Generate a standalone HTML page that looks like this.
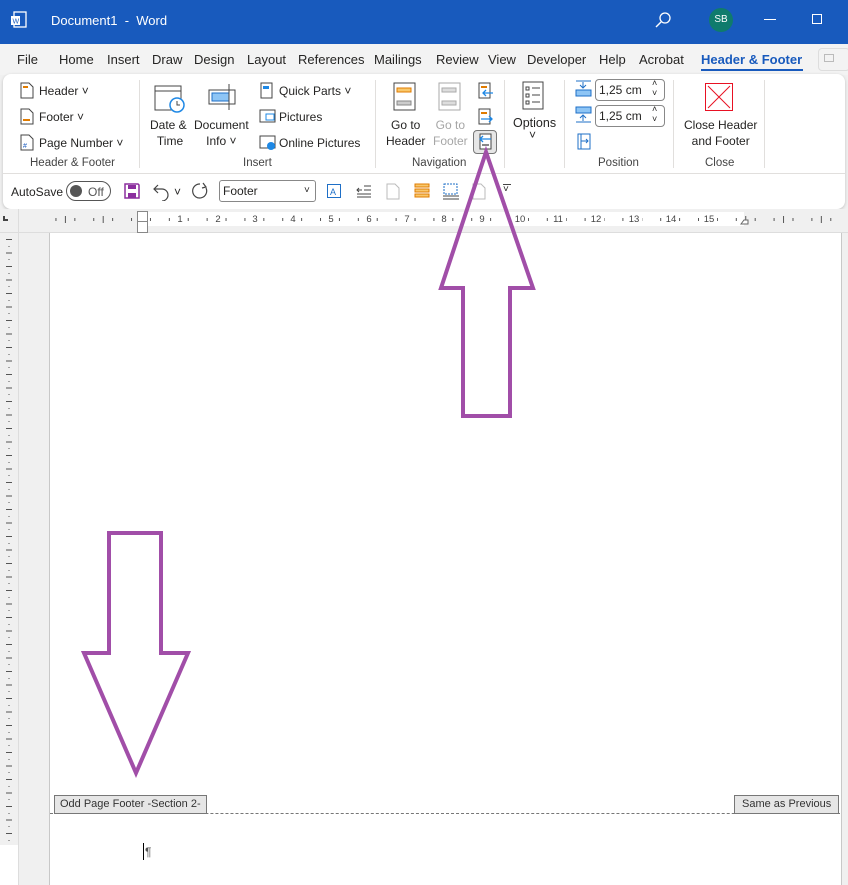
<!DOCTYPE html>
<html><head><meta charset="utf-8"><style>
*{margin:0;padding:0;box-sizing:border-box}
body{width:848px;height:885px;overflow:hidden;background:#f0f0f0;font-family:"Liberation Sans",sans-serif;font-size:12px;color:#252423;position:relative}
.a{position:absolute;white-space:nowrap}
.t{font-size:13px;top:52px}
.g{font-size:11.5px;color:#444;top:157px}
.sep{position:absolute;width:1px;background:#e1dfdd}
</style></head><body>
<!-- title bar -->
<div class="a" style="left:0;top:0;width:848px;height:44px;background:#185abd"></div>
<svg class="a" style="left:10px;top:11px" width="18" height="18"><rect x="4" y="1" width="12" height="15" fill="none" stroke="#fff" stroke-width="1.3"/><rect x="1" y="5" width="9" height="9" fill="#fff"/><text x="2.5" y="12.5" font-size="7" fill="#185abd" font-family="Liberation Sans">W</text></svg>
<div class="a" style="left:51px;top:13px;color:#fff;font-size:13px">Document1 &nbsp;- &nbsp;Word</div>
<svg class="a" style="left:654px;top:11px" width="18" height="18"><circle cx="11" cy="7" r="5" fill="none" stroke="#fff" stroke-width="1.3"/><line x1="7" y1="11" x2="2" y2="16" stroke="#fff" stroke-width="1.4"/></svg>
<div class="a" style="left:709px;top:8px;width:24px;height:24px;border-radius:12px;background:#0f7b6c;color:#fff;font-size:10px;text-align:center;line-height:24px">SB</div>
<div class="a" style="left:764px;top:19px;width:12px;height:1px;background:#fff"></div>
<div class="a" style="left:812px;top:14px;width:10px;height:10px;border:1.3px solid #fff"></div>
<!-- tabs -->
<div class="a" style="left:0;top:44px;width:848px;height:31px;background:#f3f3f3"></div>
<div class="a t" style="left:17px">File</div>
<div class="a t" style="left:59px">Home</div>
<div class="a t" style="left:107px">Insert</div>
<div class="a t" style="left:152px">Draw</div>
<div class="a t" style="left:194px">Design</div>
<div class="a t" style="left:247px">Layout</div>
<div class="a t" style="left:298px">References</div>
<div class="a t" style="left:374px">Mailings</div>
<div class="a t" style="left:436px">Review</div>
<div class="a t" style="left:488px">View</div>
<div class="a t" style="left:527px">Developer</div>
<div class="a t" style="left:599px">Help</div>
<div class="a t" style="left:639px">Acrobat</div>
<div class="a t" style="left:701px;color:#185abd;font-weight:bold;font-size:13px">Header &amp; Footer</div>
<div class="a" style="left:701px;top:69px;width:102px;height:2px;background:#185abd"></div>
<div class="a" style="left:818px;top:48px;width:32px;height:23px;border:1px solid #ddd;border-radius:4px"></div>
<div class="a" style="left:824px;top:54px;width:10px;height:8px;border:1px solid #bbb"></div>
<!-- ribbon -->
<div class="a" style="left:3px;top:74px;width:842px;height:135px;background:#fff;border-radius:8px;box-shadow:0 1px 3px rgba(0,0,0,.2)"></div>
<div class="a" style="left:3px;top:173px;width:842px;height:1px;background:#e1dfdd"></div>
<!-- H&F group -->
<svg class="a" style="left:20px;top:82px" width="14" height="17"><path d="M1 1h8l4 4v11H1z" fill="#fff" stroke="#444"/><rect x="3" y="4" width="5" height="2" fill="#e07b00"/></svg>
<div class="a" style="left:39px;top:84px">Header ˅</div>
<svg class="a" style="left:20px;top:108px" width="14" height="17"><path d="M1 1h8l4 4v11H1z" fill="#fff" stroke="#444"/><rect x="3" y="11" width="7" height="2" fill="#e07b00"/></svg>
<div class="a" style="left:39px;top:110px">Footer ˅</div>
<svg class="a" style="left:20px;top:134px" width="14" height="17"><path d="M1 1h8l4 4v11H1z" fill="#fff" stroke="#444"/><text x="3" y="14" font-size="7" fill="#185abd">#</text></svg>
<div class="a" style="left:39px;top:136px">Page Number ˅</div>
<div class="a g" style="left:30px">Header &amp; Footer</div>
<div class="sep" style="left:139px;top:80px;height:88px"></div>
<!-- Insert group -->
<svg class="a" style="left:154px;top:82px" width="32" height="32"><rect x="1" y="4" width="26" height="24" fill="#fff" stroke="#444"/><line x1="1" y1="9" x2="27" y2="9" stroke="#444"/><circle cx="23" cy="23" r="7" fill="#fff" stroke="#1e88e5" stroke-width="1.5"/><path d="M23 19v4h3" stroke="#444" fill="none"/></svg>
<div class="a" style="left:150px;top:117px;text-align:center;line-height:16px">Date &amp;<br>&nbsp;Time</div>
<svg class="a" style="left:207px;top:82px" width="32" height="30"><rect x="2" y="8" width="26" height="14" fill="#fff" stroke="#444"/><rect x="5" y="11" width="17" height="8" fill="#8ec5f5" stroke="#1e6fc7"/><line x1="22" y1="2" x2="22" y2="28" stroke="#444"/></svg>
<div class="a" style="left:194px;top:117px;text-align:center;line-height:16px">Document<br>Info ˅</div>
<svg class="a" style="left:260px;top:82px" width="14" height="17"><rect x="1" y="1" width="11" height="15" fill="#fff" stroke="#444"/><rect x="3" y="4" width="6" height="3" fill="#1e88e5"/></svg>
<div class="a" style="left:279px;top:84px">Quick Parts ˅</div>
<svg class="a" style="left:259px;top:109px" width="17" height="15"><rect x="1" y="1" width="15" height="12" fill="#fff" stroke="#444"/><rect x="7" y="5" width="8" height="6" fill="#fff" stroke="#1e88e5"/></svg>
<div class="a" style="left:279px;top:110px">Pictures</div>
<svg class="a" style="left:259px;top:135px" width="17" height="16"><rect x="1" y="1" width="15" height="12" fill="#fff" stroke="#444"/><circle cx="12" cy="11" r="4" fill="#1e88e5"/></svg>
<div class="a" style="left:279px;top:136px">Online Pictures</div>
<div class="a g" style="left:243px">Insert</div>
<div class="sep" style="left:375px;top:80px;height:88px"></div>
<!-- Navigation -->
<svg class="a" style="left:393px;top:82px" width="24" height="30"><rect x="1" y="1" width="21" height="27" fill="#fff" stroke="#444"/><rect x="4" y="6" width="14" height="4" fill="#f9c86b" stroke="#e07b00"/><rect x="4" y="19" width="14" height="4" fill="#ccc" stroke="#888"/></svg>
<div class="a" style="left:386px;top:117px;text-align:center;line-height:16px">Go to<br>Header</div>
<svg class="a" style="left:438px;top:82px" width="24" height="30"><rect x="1" y="1" width="21" height="27" fill="#fff" stroke="#aaa"/><rect x="4" y="6" width="14" height="4" fill="#ddd" stroke="#aaa"/><rect x="4" y="19" width="14" height="4" fill="#ddd" stroke="#aaa"/></svg>
<div class="a" style="left:433px;top:117px;text-align:center;line-height:16px;color:#a6a6a6">Go to<br>Footer</div>
<svg class="a" style="left:478px;top:82px" width="16" height="17"><rect x="1" y="1" width="11" height="15" fill="#fff" stroke="#444"/><rect x="3" y="4" width="6" height="2" fill="#e07b00"/><path d="M15 11H5M8 8l-3 3 3 3" stroke="#1e88e5" fill="none" stroke-width="1.3"/></svg>
<svg class="a" style="left:478px;top:108px" width="16" height="17"><rect x="1" y="1" width="11" height="15" fill="#fff" stroke="#444"/><rect x="3" y="4" width="6" height="2" fill="#e07b00"/><path d="M3 11h11M11 8l3 3-3 3" stroke="#1e88e5" fill="none" stroke-width="1.3"/></svg>
<div class="a" style="left:473px;top:130px;width:24px;height:24px;background:#e6e6e6;border:1px solid #777;border-radius:4px"></div>
<svg class="a" style="left:478px;top:133px" width="16" height="18"><rect x="2" y="1" width="11" height="15" fill="#fff" stroke="#444"/><rect x="4" y="11" width="7" height="2" fill="#888"/><path d="M13 6H2M5 3L2 6l3 3" stroke="#1e88e5" fill="none" stroke-width="1.3"/></svg>
<div class="a g" style="left:412px">Navigation</div>
<div class="sep" style="left:504px;top:80px;height:88px"></div>
<!-- Options -->
<svg class="a" style="left:522px;top:81px" width="22" height="29"><rect x="1" y="1" width="20" height="27" fill="#fff" stroke="#444"/><g stroke="#444" fill="none"><rect x="4" y="6" width="3" height="3"/><rect x="4" y="13" width="3" height="3"/><rect x="4" y="20" width="3" height="3"/><path d="M10 7h8M10 14h8M10 21h8"/></g></svg>
<div class="a" style="left:513px;top:116px;font-size:12.5px">Options</div>
<div class="a" style="left:529px;top:128px">˅</div>
<div class="sep" style="left:564px;top:80px;height:88px"></div>
<!-- Position -->
<svg class="a" style="left:575px;top:80px" width="18" height="18"><rect x="1" y="10" width="15" height="6" fill="#8ec5f5" stroke="#1e6fc7"/><path d="M1 1h15M8 2v6M5 5l3 3 3-3" stroke="#1e6fc7" fill="none"/></svg>
<div class="a" style="left:595px;top:79px;width:70px;height:22px;border:1px solid #888;border-radius:4px;padding:3px 0 0 3px">1,25 cm</div>
<div class="a" style="left:652px;top:78px;font-size:9px;line-height:10px">˄<br>˅</div>
<svg class="a" style="left:575px;top:106px" width="18" height="18"><rect x="1" y="1" width="15" height="6" fill="#8ec5f5" stroke="#1e6fc7"/><path d="M1 16h15M8 15v-6M5 12l3-3 3 3" stroke="#1e6fc7" fill="none"/></svg>
<div class="a" style="left:595px;top:105px;width:70px;height:22px;border:1px solid #888;border-radius:4px;padding:3px 0 0 3px">1,25 cm</div>
<div class="a" style="left:652px;top:104px;font-size:9px;line-height:10px">˄<br>˅</div>
<svg class="a" style="left:577px;top:133px" width="14" height="17"><rect x="1" y="1" width="12" height="15" fill="#fff" stroke="#1e6fc7"/><path d="M4 1v15M4 8h7M9 6l2 2-2 2" stroke="#1e6fc7" fill="none"/></svg>
<div class="a g" style="left:598px">Position</div>
<div class="sep" style="left:673px;top:80px;height:88px"></div>
<!-- Close -->
<svg class="a" style="left:705px;top:83px" width="29" height="29"><rect x="0.5" y="0.5" width="27" height="27" fill="#fff" stroke="#e81123"/><path d="M3 3l22 22M25 3L3 25" stroke="#e81123"/></svg>
<div class="a" style="left:684px;top:117px;text-align:center;line-height:16px">Close Header<br>and Footer</div>
<div class="a g" style="left:705px">Close</div>
<div class="sep" style="left:764px;top:80px;height:88px"></div>
<!-- QAT -->
<div class="a" style="left:11px;top:185px">AutoSave</div>
<div class="a" style="left:66px;top:181px;width:45px;height:20px;border:1px solid #555;border-radius:10px"></div>
<div class="a" style="left:70px;top:185px;width:12px;height:12px;border-radius:6px;background:#555"></div>
<div class="a" style="left:88px;top:185px;color:#555">Off</div>
<svg class="a" style="left:124px;top:183px" width="16" height="16"><path d="M1 1h13l1 1v13H1z" fill="#fff" stroke="#8b2e9e" stroke-width="1.5"/><rect x="4" y="2" width="8" height="4" fill="#8b2e9e"/><rect x="4" y="10" width="8" height="5" fill="#8b2e9e"/></svg>
<svg class="a" style="left:152px;top:181px" width="20" height="20"><path d="M6 4L2 8l4 4M2 8h8a6 6 0 0 1 0 12" stroke="#444" fill="none" stroke-width="1.2"/></svg>
<div class="a" style="left:174px;top:185px">˅</div>
<svg class="a" style="left:190px;top:181px" width="20" height="20"><path d="M10 3a7 7 0 1 0 6 4M13 2l3 4-4 1" stroke="#444" fill="none" stroke-width="1.2"/></svg>
<div class="a" style="left:219px;top:180px;width:97px;height:22px;border:1px solid #888;border-radius:3px;padding:3px 0 0 3px">Footer</div>
<div class="a" style="left:304px;top:185px;font-size:10px">˅</div>
<svg class="a" style="left:326px;top:183px" width="16" height="16"><rect x="1.5" y="1.5" width="13" height="13" fill="none" stroke="#1e6fc7"/><text x="4" y="12" font-size="9" fill="#1e6fc7">A</text></svg>
<svg class="a" style="left:356px;top:184px" width="16" height="14"><path d="M8 2h7M8 6h7M1 10h14M1 13h14M1 6h5M3 4L1 6l2 2" stroke="#444" fill="none"/></svg>
<svg class="a" style="left:386px;top:183px" width="14" height="17"><path d="M1 1h8l4 4v11H1z" fill="#fff" stroke="#bbb"/></svg>
<svg class="a" style="left:414px;top:183px" width="16" height="16"><g fill="#f9c86b" stroke="#e07b00"><rect x="1" y="1" width="14" height="3"/><rect x="1" y="6" width="14" height="3"/><rect x="1" y="11" width="14" height="3"/></g></svg>
<svg class="a" style="left:442px;top:182px" width="18" height="18"><rect x="2" y="2" width="13" height="10" fill="none" stroke="#1e6fc7" stroke-dasharray="2 1"/><path d="M1 14h16M1 17h16" stroke="#444"/></svg>
<svg class="a" style="left:472px;top:183px" width="14" height="17"><path d="M1 1h8l4 4v11H1z" fill="#fff" stroke="#bbb"/></svg>
<div class="a" style="left:503px;top:184px;font-size:10px">˅</div>
<div class="a" style="left:503px;top:184px;width:8px;height:1px;background:#444"></div>
<!-- ruler -->
<div class="a" style="left:0;top:209px;width:848px;height:24px;background:#f0f0f0"></div>
<div class="a" style="left:0;top:232px;width:848px;height:1px;background:#ddd"></div>
<div class="a" style="left:148px;top:212px;width:596px;height:14px;background:#fff"></div>
<div class="a" style="left:3px;top:216px;width:5px;height:5px;border-left:2px solid #444;border-bottom:2px solid #444"></div>
<div class="a" style="left:18px;top:209px;width:1px;height:676px;background:#ddd"></div>
<!-- tick pattern: period 37.8px (1cm); half-tick at 18.9 taller, quarter dots -->
<div class="a" style="left:47px;top:216px;width:800px;height:7px;background-image:linear-gradient(90deg,transparent 0,transparent 9px,#555 9px,#555 10px,transparent 10px,transparent 28px,#555 28px,#555 29px,transparent 29px);background-size:37.8px 3px;background-repeat:repeat-x;background-position:-0.5px 2px"></div>
<div class="a" style="left:47px;top:216px;width:800px;height:7px;background-image:linear-gradient(90deg,transparent 18px,#555 18px,#555 19px,transparent 19px);background-size:37.8px 7px;background-repeat:repeat-x"></div>
<svg class="a" style="left:0;top:210px" width="848" height="20"><g font-size="9.5" fill="#444" font-family="Liberation Sans" text-anchor="middle">
<rect x="174" y="3" width="12" height="12" fill="#fff"/><text x="180" y="12">1</text>
<rect x="212" y="3" width="12" height="12" fill="#fff"/><text x="218" y="12">2</text>
<rect x="250" y="3" width="12" height="12" fill="#fff"/><text x="255" y="12">3</text>
<rect x="287" y="3" width="12" height="12" fill="#fff"/><text x="293" y="12">4</text>
<rect x="325" y="3" width="12" height="12" fill="#fff"/><text x="331" y="12">5</text>
<rect x="363" y="3" width="12" height="12" fill="#fff"/><text x="369" y="12">6</text>
<rect x="401" y="3" width="12" height="12" fill="#fff"/><text x="407" y="12">7</text>
<rect x="438" y="3" width="12" height="12" fill="#fff"/><text x="444" y="12">8</text>
<rect x="476" y="3" width="12" height="12" fill="#fff"/><text x="482" y="12">9</text>
<rect x="512" y="3" width="16" height="12" fill="#fff"/><text x="520" y="12">10</text>
<rect x="550" y="3" width="16" height="12" fill="#fff"/><text x="558" y="12">11</text>
<rect x="588" y="3" width="16" height="12" fill="#fff"/><text x="596" y="12">12</text>
<rect x="626" y="3" width="16" height="12" fill="#fff"/><text x="634" y="12">13</text>
<rect x="663" y="3" width="16" height="12" fill="#fff"/><text x="671" y="12">14</text>
<rect x="701" y="3" width="16" height="12" fill="#fff"/><text x="709" y="12">15</text>
</g><path d="M741 14l3-4h4v4z" fill="#fff" stroke="#666"/></svg>
<div class="a" style="left:137px;top:211px;width:11px;height:22px;border:1px solid #888;background:#fff"></div>
<div class="a" style="left:137px;top:221px;width:11px;height:1px;background:#888"></div>
<!-- vertical ruler ticks -->
<div class="a" style="left:0;top:233px;width:18px;height:620px;background-image:linear-gradient(180deg,transparent 6px,#555 6px,#555 7px,transparent 7px);background-size:6px 13.5px;background-position:6px 0;background-repeat:repeat-y"></div>
<div class="a" style="left:0;top:233px;width:18px;height:620px;background-image:linear-gradient(180deg,transparent 13px,#555 13px,#555 14px,transparent 14px);background-size:2px 13.5px;background-position:8px 0;background-repeat:repeat-y"></div>
<div class="a" style="left:0;top:845px;width:18px;height:40px;background:#fff"></div>
<!-- page -->
<div class="a" style="left:49px;top:233px;width:793px;height:652px;background:#fff;border-left:1px solid #c8c8c8;border-right:1px solid #c8c8c8"></div>
<div class="a" style="left:50px;top:813px;width:790px;border-top:1px dashed #777"></div>
<div class="a" style="left:54px;top:795px;height:19px;background:#e6e6e6;border:1px solid #777;padding:2px 5px;font-size:11px;color:#333">Odd Page Footer -Section 2-</div>
<div class="a" style="left:734px;top:795px;height:19px;background:#e6e6e6;border:1px solid #777;padding:2px 7px;font-size:11px;color:#333">Same as Previous</div>
<div class="a" style="left:143px;top:843px;width:1px;height:17px;background:#000"></div>
<div class="a" style="left:145px;top:845px;font-size:12px;color:#555">¶</div>
<!-- arrows -->
<svg class="a" style="left:0;top:0" width="848" height="885"><g fill="none" stroke="#a14ea8" stroke-width="4" stroke-linejoin="miter">
<path d="M486 152L441 288H463V416H510V288H533Z"/>
<path d="M109 533H161V653H188L136 773L84 653H109Z"/>
</g></svg>
</body></html>
